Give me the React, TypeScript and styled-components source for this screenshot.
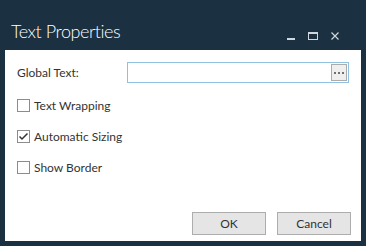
import React from "react";
import styled, { createGlobalStyle } from "styled-components";

const Global = createGlobalStyle`
  html, body { margin: 0; padding: 0; background: #1b3040; }
  body { width: 366px; height: 246px; overflow: hidden; font-family: "Lato", "Liberation Sans", sans-serif; }
`;

const Window = styled.div`
  width: 366px;
  height: 246px;
  background: #1b3040;
  display: flex;
  flex-direction: column;
  padding: 0 5px 5px 5px;
  box-sizing: border-box;
`;

const TitleBar = styled.div`
  height: 50px;
  display: flex;
  align-items: flex-end;
  padding: 0 0 8px 6px;
  box-sizing: border-box;
`;

const Title = styled.div`
  flex: 1;
  color: #ffffff;
  font-family: "Lato", sans-serif;
  font-weight: 300;
  font-size: 18px;
  letter-spacing: -0.45px;
  line-height: 22px;
`;

const Controls = styled.div`
  display: flex;
  align-items: center;
  gap: 13px;
  margin-right: 22px;
  margin-bottom: 2px;
`;

const Body = styled.div`
  flex: 1;
  background: #ffffff;
  display: flex;
  flex-direction: column;
  padding: 12px 10px 6px 12px;
  box-sizing: border-box;
`;

const FieldRow = styled.div`
  display: flex;
  align-items: center;
  height: 21px;
`;

const Label = styled.div`
  width: 110px;
  font-size: 12px;
  color: #333;
`;

const Input = styled.div`
  flex: 1;
  height: 21px;
  box-sizing: border-box;
  border: 1px solid #8fc1e3;
  display: flex;
  justify-content: flex-end;
  align-items: center;
  padding-right: 1px;
  margin-right: 2px;
`;

const Ellipsis = styled.div`
  width: 16px;
  height: 17px;
  box-sizing: border-box;
  border: 1px solid #acacac;
  background: #efefef;
  display: flex;
  align-items: center;
  justify-content: center;
  gap: 2px;
`;

const Dot = styled.span`
  width: 2px;
  height: 2px;
  background: #707070;
`;

const Checks = styled.div`
  display: flex;
  flex-direction: column;
  gap: 18px;
  margin-top: 16px;
`;

const CheckRow = styled.div`
  display: flex;
  align-items: center;
  gap: 4px;
  height: 13px;
  font-size: 12px;
  color: #333;
`;

const Box = styled.div`
  width: 13px;
  height: 13px;
  box-sizing: border-box;
  border: 1px solid #8c8c8c;
  background: #fff;
  display: flex;
  align-items: center;
  justify-content: center;
`;

const Spacer = styled.div`
  flex: 1;
`;

const Buttons = styled.div`
  display: flex;
  justify-content: flex-end;
  gap: 11px;
`;

const Button = styled.button`
  width: 74px;
  height: 23px;
  box-sizing: border-box;
  border: 1px solid #adadad;
  background: #e5e5e5;
  font-family: "Lato", sans-serif;
  font-size: 12px;
  color: #333;
  padding: 0;
`;

const Check = ({ checked, label }: { checked?: boolean; label: string }) => (
  <CheckRow>
    <Box>
      {checked && (
        <svg width="11" height="11" viewBox="0 0 11 11">
          <path d="M1.5 5.5 L4 8 L9.5 2.5" fill="none" stroke="#333" strokeWidth="1.5" />
        </svg>
      )}
    </Box>
    {label}
  </CheckRow>
);

export default function App() {
  return (
    <>
      <Global />
      <Window>
        <TitleBar>
          <Title>Text Properties</Title>
          <Controls>
            <svg width="8" height="8" viewBox="0 0 8 8">
              <rect x="0" y="6" width="8" height="2" fill="#d0d6db" />
            </svg>
            <svg width="10" height="8" viewBox="0 0 10 8">
              <rect x="0.5" y="0.5" width="9" height="7" fill="none" stroke="#d0d6db" />
              <rect x="0" y="0" width="10" height="2" fill="#d0d6db" />
            </svg>
            <svg width="8" height="8" viewBox="0 0 8 8">
              <path d="M0.5 0.5 L7.5 7.5 M7.5 0.5 L0.5 7.5" stroke="#d0d6db" strokeWidth="1.2" />
            </svg>
          </Controls>
        </TitleBar>
        <Body>
          <FieldRow>
            <Label>Global Text:</Label>
            <Input>
              <Ellipsis>
                <Dot />
                <Dot />
                <Dot />
              </Ellipsis>
            </Input>
          </FieldRow>
          <Checks>
            <Check label="Text Wrapping" />
            <Check checked label="Automatic Sizing" />
            <Check label="Show Border" />
          </Checks>
          <Spacer />
          <Buttons>
            <Button>OK</Button>
            <Button>Cancel</Button>
          </Buttons>
        </Body>
      </Window>
    </>
  );
}
